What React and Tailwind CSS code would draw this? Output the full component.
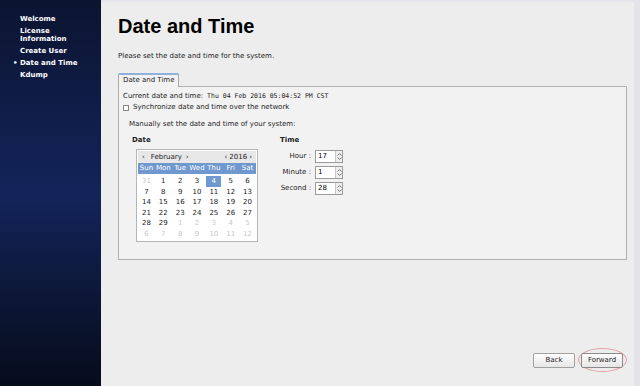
const steps = [
  { label: ["Welcome"] },
  { label: ["License", "Information"] },
  { label: ["Create User"] },
  { label: ["Date and Time"], current: true },
  { label: ["Kdump"] },
];

const days = ["Sun", "Mon", "Tue", "Wed", "Thu", "Fri", "Sat"];
const cells = [
  [31, true], [1], [2], [3], [4, false, true], [5], [6],
  [7], [8], [9], [10], [11], [12], [13],
  [14], [15], [16], [17], [18], [19], [20],
  [21], [22], [23], [24], [25], [26], [27],
  [28], [29], [1, true], [2, true], [3, true], [4, true], [5, true],
  [6, true], [7, true], [8, true], [9, true], [10, true], [11, true], [12, true],
];

function Spin({ value }) {
  return (
    <div className="flex h-[13px] w-[28px] items-stretch border border-[#9a9a9a] bg-white">
      <div className="flex-1 pl-[2px] text-[7px] leading-[11px] text-black">{value}</div>
      <div className="flex w-[7px] flex-col items-center justify-center gap-[1px] border-l border-[#c8c8c8] bg-[#eeeeee]">
        <svg width="5" height="3" viewBox="0 0 5 3">
          <path d="M0.5 2.5 L2.5 0.5 L4.5 2.5" fill="none" stroke="#555" strokeWidth="0.8" />
        </svg>
        <svg width="5" height="3" viewBox="0 0 5 3">
          <path d="M0.5 0.5 L2.5 2.5 L4.5 0.5" fill="none" stroke="#555" strokeWidth="0.8" />
        </svg>
      </div>
    </div>
  );
}

export default function App() {
  return (
    <div
      className="flex h-[386px] w-[640px] overflow-hidden bg-[#ededed] text-[#222]"
      style={{ fontFamily: '"DejaVu Sans", sans-serif' }}
    >
      <aside className="w-[101px] shrink-0 bg-gradient-to-b from-[#0b1430] via-[#13245a] to-[#070c1c] pt-[15px] pl-[13px]">
        {steps.map((s, i) => (
          <div key={i} className="mb-[4px] flex text-[7px] font-bold leading-[8px] text-white">
            <span className="w-[7px] text-[7px]">{s.current ? "•" : ""}</span>
            <div>
              {s.label.map((l) => (
                <div key={l}>{l}</div>
              ))}
            </div>
          </div>
        ))}
      </aside>

      <main className="flex flex-1 flex-col border-t-2 border-r-[6px] border-[#e4e4ea] pl-[17px] pr-[7px]">
        <h1
          className="mt-[12px] text-[20px] font-bold leading-[24px] text-black"
          style={{ fontFamily: '"Liberation Sans", sans-serif' }}
        >
          Date and Time
        </h1>
        <p className="mt-[14px] text-[7px] leading-[9px]">Please set the date and time for the system.</p>

        <div className="mt-[11px] flex">
          <div className="relative top-[1px] rounded-t-[2px] border border-b-0 border-[#a9a9a9] bg-[#f2f2f2] px-[4px] pt-[2px] pb-[2px] text-[7px] leading-[9px]">
            <div className="absolute -top-px left-0 right-0 h-[2px] bg-[#8fb0d8]" />
            Date and Time
          </div>
        </div>
        <section className="h-[174px] border border-[#b0b0b0] bg-[#f2f2f2] px-[4px] pt-[5px]">
          <div className="flex items-baseline text-[7px] leading-[9px]">
            <span>Current date and time:</span>
            <span className="ml-[4px] text-[6.5px]" style={{ fontFamily: '"DejaVu Sans Mono", monospace' }}>
              Thu 04 Feb 2016 05:04:52 PM CST
            </span>
          </div>
          <label className="mt-[2px] flex items-center gap-[4px] text-[7px] leading-[9px]">
            <span className="h-[6px] w-[6px] border border-[#888] bg-white" />
            Synchronize date and time over the network
          </label>
          <p className="mt-[8px] pl-[6px] text-[7px] leading-[9px]">Manually set the date and time of your system:</p>

          <div className="mt-[7px] flex pl-[9px]">
            <div className="w-[148px]">
              <div className="text-[7px] font-bold leading-[9px]">Date</div>
              <div className="mt-[4px] ml-[4px] w-[122px] border border-[#b5b5b5] bg-white p-[1px] pb-[2px]">
                <div className="flex h-[12px] items-center justify-between bg-[#e7e7e7] px-[4px] text-[7px] leading-[9px]">
                  <span className="flex gap-[4px]">
                    <span>‹</span>
                    <span className="ml-[2px]">February</span>
                    <span>›</span>
                  </span>
                  <span className="flex gap-[2px]">
                    <span>‹</span>
                    <span>2016</span>
                    <span>›</span>
                  </span>
                </div>
                <div className="grid grid-cols-7 bg-[#6f98cf] text-center text-[7px] leading-[11px] text-white">
                  {days.map((d) => (
                    <span key={d}>{d}</span>
                  ))}
                </div>
                <div className="grid grid-cols-7 pt-[2px] text-center text-[7px] leading-[10.5px]">
                  {cells.map(([n, dim, sel], i) => (
                    <span
                      key={i}
                      className={
                        sel
                          ? "mx-[1px] bg-[#6f98cf] text-white"
                          : dim
                          ? "text-[#c8c8c8]"
                          : "text-[#222]"
                      }
                    >
                      {n}
                    </span>
                  ))}
                </div>
              </div>
            </div>

            <div className="w-[80px]">
              <div className="text-[7px] font-bold leading-[9px]">Time</div>
              <div className="mt-[5px] grid grid-cols-[31px_auto] items-center gap-x-[4px] gap-y-[3px] text-[7px]">
                <span className="text-right">Hour :</span>
                <Spin value="17" />
                <span className="text-right">Minute :</span>
                <Spin value="1" />
                <span className="text-right">Second :</span>
                <Spin value="28" />
              </div>
            </div>
          </div>
        </section>

        <div className="mt-auto mb-[18px] flex items-end justify-end gap-[6px] pr-[4px]">
          <button className="h-[15px] w-[42px] rounded-[2px] border border-[#a0a0a0] bg-gradient-to-b from-white to-[#e6e6e6] text-[7px] leading-[13px] text-[#222]">
            Back
          </button>
          <div className="relative flex">
            <div className="absolute -left-[3px] -right-[4px] -top-[5px] -bottom-[4px] rounded-[50%] border border-[#e6a0a8]" />
            <button className="relative h-[15px] w-[42px] rounded-[2px] border border-[#8a8a8a] bg-gradient-to-b from-white to-[#e6e6e6] text-[7px] leading-[13px] text-[#222]">
              Forward
            </button>
          </div>
        </div>
      </main>
    </div>
  );
}
